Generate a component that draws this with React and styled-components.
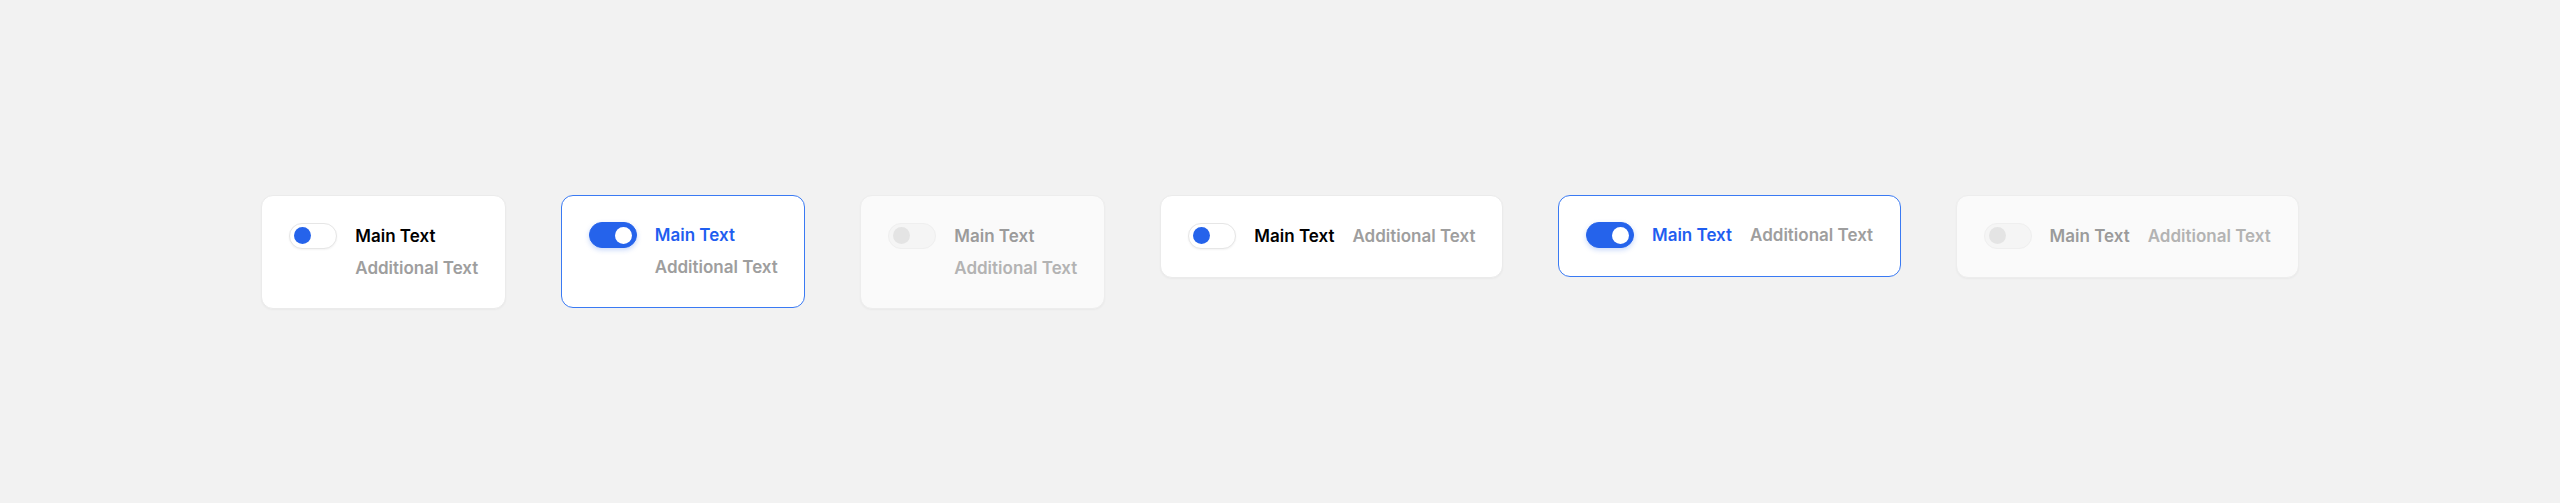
import React from 'react';
import styled, { createGlobalStyle, css } from 'styled-components';

const GlobalStyle = createGlobalStyle`
  html, body {
    margin: 0;
    padding: 0;
    background: #f2f2f2;
    font-family: Inter, "Noto Sans", "Liberation Sans", sans-serif;
  }
`;

const Page = styled.div`
  height: 503px;
  display: flex;
  align-items: center;
  justify-content: center;
`;

const Row = styled.div`
  display: flex;
  align-items: flex-start;
  gap: 55px;
`;

const Card = styled.div`
  box-sizing: border-box;
  display: flex;
  align-items: flex-start;
  gap: 18px;
  padding: 27px 27px 28px;
  background: #fff;
  border: 1px solid #ebebeb;
  border-radius: 12px;
  box-shadow: 0 1px 2px rgba(0, 0, 0, 0.04);

  ${({ $active }) => $active && css`
    border: 1.5px solid #3a7af3;
    padding: 26.5px 26.5px 27.5px;
    box-shadow: none;
  `}

  ${({ $disabled }) => $disabled && css`
    background: #fafafa;
    border-color: #ededed;
  `}
`;

const Track = styled.div`
  box-sizing: border-box;
  flex: none;
  width: 48px;
  height: 26px;
  border-radius: 13px;
  display: flex;
  align-items: center;
  padding: 0 4px;
  background: #fff;
  border: 1px solid #e6e6e6;
  box-shadow: 0 1px 2px rgba(0, 0, 0, 0.05);
  justify-content: ${({ $on }) => ($on ? 'flex-end' : 'flex-start')};

  ${({ $on }) => $on && css`
    background: #2563eb;
    border-color: #2563eb;
    box-shadow: 0 2px 5px rgba(37, 99, 235, 0.25);
  `}

  ${({ $disabled }) => $disabled && css`
    background: #f5f5f5;
    border-color: #efefef;
    box-shadow: none;
  `}
`;

const Knob = styled.span`
  width: 17px;
  height: 17px;
  border-radius: 50%;
  background: ${({ $on, $disabled }) => ($disabled ? '#e4e4e4' : $on ? '#fff' : '#2563eb')};
`;

const Texts = styled.div`
  display: flex;
  flex-direction: ${({ $inline }) => ($inline ? 'row' : 'column')};
  gap: ${({ $inline }) => ($inline ? '18px' : '7px')};
`;

const MainText = styled.span`
  font-size: 17px;
  font-weight: 600;
  line-height: 26px;
  white-space: nowrap;
  color: ${({ $active, $disabled }) => ($disabled ? '#9b9b9b' : $active ? '#1f5ef0' : '#000')};
`;

const Additional = styled.span`
  font-size: 17px;
  font-weight: 600;
  line-height: ${({ $inline }) => ($inline ? '26px' : '24px')};
  white-space: nowrap;
  color: ${({ $disabled }) => ($disabled ? '#b3b3b3' : '#9e9e9e')};
`;

const Toggle = ({ on, disabled }) => (
  <Track $on={on} $disabled={disabled}>
    <Knob $on={on} $disabled={disabled} />
  </Track>
);

const ToggleCard = ({ on, active, disabled, inline }) => (
  <Card $active={active} $disabled={disabled}>
    <Toggle on={on} disabled={disabled} />
    <Texts $inline={inline}>
      <MainText $active={active} $disabled={disabled}>Main Text</MainText>
      <Additional $inline={inline} $disabled={disabled}>Additional Text</Additional>
    </Texts>
  </Card>
);

const cards = [
  { key: 'v-default' },
  { key: 'v-active', on: true, active: true },
  { key: 'v-disabled', disabled: true },
  { key: 'h-default', inline: true },
  { key: 'h-active', on: true, active: true, inline: true },
  { key: 'h-disabled', disabled: true, inline: true },
];

export default function App() {
  return (
    <>
      <GlobalStyle />
      <Page>
        <Row>
          {cards.map(({ key, ...props }) => (
            <ToggleCard key={key} {...props} />
          ))}
        </Row>
      </Page>
    </>
  );
}
